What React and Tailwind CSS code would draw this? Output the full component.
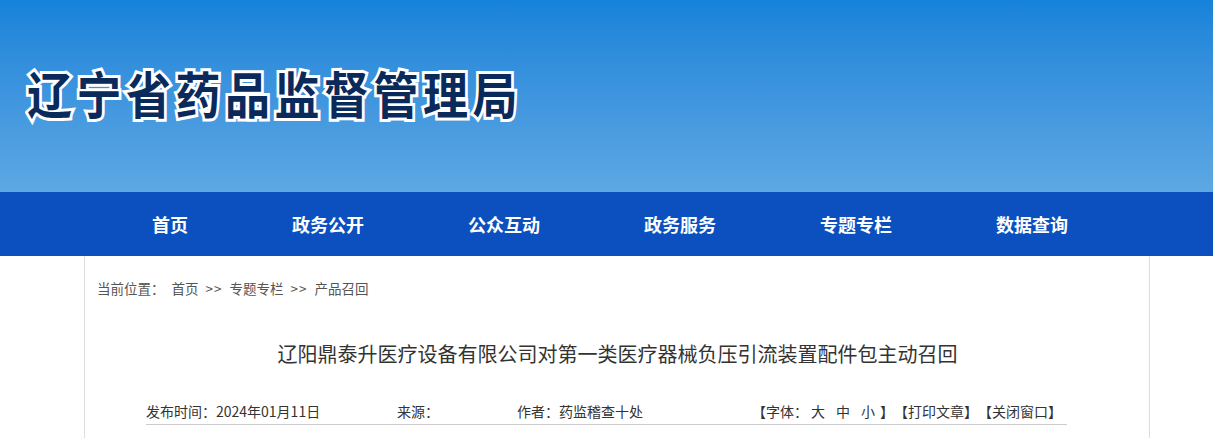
export default function App() {
  const nav = ["首页", "政务公开", "公众互动", "政务服务", "专题专栏", "数据查询"];
  return (
    <div className="w-[1213px] h-[438px] overflow-hidden bg-white font-['Noto_Sans_CJK_SC',sans-serif]">
      <header className="h-[192px] bg-gradient-to-b from-[#1582d9] to-[#5da8e3] pl-[27px] pt-[62px]">
        <h1 className="inline-block origin-left scale-x-90 text-[50px] leading-[60px] font-semibold tracking-[5px] text-[#0b2a5c] [-webkit-text-stroke:6px_white] [paint-order:stroke_fill]">
          辽宁省药品监督管理局
        </h1>
      </header>
      <nav className="h-[64px] bg-[#0c50bf]">
        <ul className="ml-[100px] h-full flex items-center">
          {nav.map((n) => (
            <li key={n} className="px-[52px] text-white text-[18px] font-bold leading-[24px] whitespace-nowrap">
              {n}
            </li>
          ))}
        </ul>
      </nav>
      <main className="ml-[84px] w-[1066px] h-[182px] border-x border-[#dddddd]">
        <div className="pt-[24px] pl-[12px] flex items-center gap-[7px] text-[13.5px] leading-[16px] text-[#555]">
          <span>当前位置：</span>
          <span>首页</span>
          <span className="tracking-[1px]">&gt;&gt;</span>
          <span>专题专栏</span>
          <span className="tracking-[1px]">&gt;&gt;</span>
          <span>产品召回</span>
        </div>
        <h2 className="mt-[43px] text-center text-[20px] leading-[30px] text-[#333] pl-[1px]">
          辽阳鼎泰升医疗设备有限公司对第一类医疗器械负压引流装置配件包主动召回
        </h2>
        <div className="mt-[32px] ml-[61px] w-[921px] border-b border-[#cccccc] pb-[3px] flex items-center text-[14px] leading-[20px] text-[#333]">
          <span className="w-[251px]">发布时间：2024年01月11日</span>
          <span className="w-[120px]">来源：</span>
          <span>作者：药监稽查十处</span>
          <span className="ml-auto mr-[5px] flex">
            <span>【字体：</span>
            <span className="ml-[3px] mr-[9px]">大</span>
            <span className="mx-[2px]">中</span>
            <span className="ml-[9px] mr-[5px]">小</span>
            <span>】</span>
            <span>【打印文章】</span>
            <span>【关闭窗口】</span>
          </span>
        </div>
      </main>
    </div>
  );
}
